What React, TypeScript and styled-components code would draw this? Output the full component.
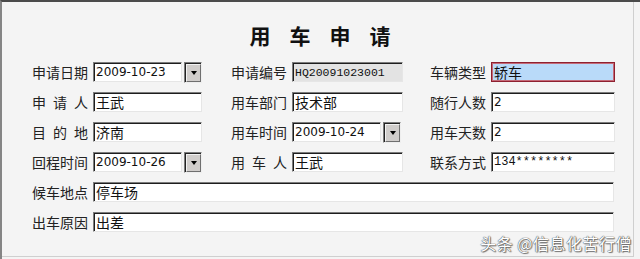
import React from "react";
import styled, { createGlobalStyle, css } from "styled-components";

const GlobalStyle = createGlobalStyle`
  html, body { margin: 0; padding: 0; background: #f4f4f4; }
  body { font-family: "Noto Sans CJK SC", "Noto Sans", sans-serif; }
`;

const Window = styled.div`
  position: relative;
  width: 640px;
  height: 259px;
  box-sizing: border-box;
  border-top: 2px solid #4b4b4b;
  border-left: 2px solid #858585;
  background: #f4f4f4;
  overflow: hidden;
`;

const Frame = styled.div`
  width: 632px;
  height: 255px;
  box-sizing: border-box;
  border-right: 1px solid #cfcfcf;
  border-bottom: 1px solid #cfcfcf;
  display: flex;
  flex-direction: column;
`;

const Title = styled.h1`
  margin: 21px 0 0 0;
  width: 636px;
  height: 24px;
  line-height: 24px;
  text-align: center;
  font-family: "Noto Sans CJK SC", sans-serif;
  font-size: 21px;
  font-weight: 700;
  color: #111;
  letter-spacing: 19px;
  text-indent: 19px;
`;

const Form = styled.div`
  margin-top: 15px;
  padding-left: 30px;
  display: grid;
  grid-template-columns: 199px 199px 185px;
  grid-auto-rows: 20px;
  row-gap: 10px;
`;

const Field = styled.div<{ $full?: boolean; $gap?: number }>`
  display: flex;
  align-items: center;
  gap: ${(p) => p.$gap ?? 5}px;
  ${(p) => p.$full && css`grid-column: 1 / -1;`}
`;

const Label = styled.div`
  width: 56px;
  display: flex;
  justify-content: space-between;
  font-family: "Noto Sans CJK SC", sans-serif;
  font-size: 14px;
  line-height: 20px;
  color: #222;
`;

type BoxKind = "normal" | "readonly" | "focused";

const TextBox = styled.div<{ $w: number; $kind?: BoxKind; $font?: "cjk" | "num" | "mono"; $size?: number }>`
  width: ${(p) => p.$w}px;
  height: 20px;
  box-sizing: border-box;
  display: flex;
  align-items: center;
  padding-left: 2px;
  white-space: nowrap;
  overflow: hidden;
  color: #111;
  background: #fff;
  border: 1px solid;
  border-color: #7c7c7c #e6e6e6 #e6e6e6 #7c7c7c;
  box-shadow: inset 1px 1px 0 #1e1e1e;
  font-size: ${(p) => p.$size ?? 14}px;
  font-family: ${(p) =>
    p.$font === "num"
      ? `"DejaVu Sans", sans-serif`
      : p.$font === "mono"
      ? `"Liberation Mono", monospace`
      : `"Noto Sans CJK SC", sans-serif`};
  ${(p) =>
    p.$kind === "readonly" &&
    css`
      background: #e3e3e3;
    `}
  ${(p) =>
    p.$kind === "focused" &&
    css`
      background: #b9daf9;
      border: 1px solid #8e2030;
      box-shadow: inset 0 0 0 1px #c46a78;
    `}
`;

const DateWrap = styled.div`
  display: flex;
  align-items: center;
  gap: 2px;
`;

const DropButton = styled.div`
  width: 18px;
  height: 21px;
  box-sizing: border-box;
  border: 1px solid;
  border-color: #7c7c7c #eeeeee #eeeeee #7c7c7c;
  box-shadow: inset 1px 1px 0 #222;
  padding: 1px 0 0 1px;
  display: flex;
`;

const ButtonFace = styled.div`
  flex: 1;
  background: #d0cdcb;
  border: 1px solid;
  border-color: #f2f2f2 #6f6f6f #6f6f6f #f2f2f2;
  display: flex;
  align-items: center;
  justify-content: center;
  &::after {
    content: "";
    width: 0;
    height: 0;
    border-left: 3px solid transparent;
    border-right: 3px solid transparent;
    border-top: 4px solid #000;
  }
`;

const Watermark = styled.div`
  position: absolute;
  right: 8px;
  bottom: 5px;
  font-family: "Noto Sans CJK SC", sans-serif;
  font-size: 16px;
  line-height: 22px;
  color: #ffffff;
  text-shadow: 0 0 1px #4a4a4a, 0 0 1px #4a4a4a, 1px 1px 1px #777;
  letter-spacing: 0.5px;
`;

const LabelText: React.FC<{ text: string }> = ({ text }) => (
  <Label>
    {text.split("").map((c, i) => (
      <span key={i}>{c}</span>
    ))}
  </Label>
);

const DateField: React.FC<{ value: string; w: number }> = ({ value, w }) => (
  <DateWrap>
    <TextBox $w={w} $font="num" $size={12}>
      {value}
    </TextBox>
    <DropButton>
      <ButtonFace />
    </DropButton>
  </DateWrap>
);

export default function App() {
  return (
    <>
      <GlobalStyle />
      <Window>
        <Frame>
          <Title>用车申请</Title>
          <Form>
            <Field>
              <LabelText text="申请日期" />
              <DateField value="2009-10-23" w={89} />
            </Field>
            <Field $gap={5}>
              <LabelText text="申请编号" />
              <TextBox $w={111} $kind="readonly" $font="mono" $size={11.5}>
                HQ20091023001
              </TextBox>
            </Field>
            <Field>
              <LabelText text="车辆类型" />
              <TextBox $w={124} $kind="focused">
                轿车
              </TextBox>
            </Field>

            <Field>
              <LabelText text="申请人" />
              <TextBox $w={109}>王武</TextBox>
            </Field>
            <Field>
              <LabelText text="用车部门" />
              <TextBox $w={111}>技术部</TextBox>
            </Field>
            <Field>
              <LabelText text="随行人数" />
              <TextBox $w={124} $font="num" $size={12}>
                2
              </TextBox>
            </Field>

            <Field>
              <LabelText text="目的地" />
              <TextBox $w={109}>济南</TextBox>
            </Field>
            <Field>
              <LabelText text="用车时间" />
              <DateField value="2009-10-24" w={89} />
            </Field>
            <Field>
              <LabelText text="用车天数" />
              <TextBox $w={124} $font="num" $size={12}>
                2
              </TextBox>
            </Field>

            <Field>
              <LabelText text="回程时间" />
              <DateField value="2009-10-26" w={89} />
            </Field>
            <Field>
              <LabelText text="用车人" />
              <TextBox $w={111}>王武</TextBox>
            </Field>
            <Field>
              <LabelText text="联系方式" />
              <TextBox $w={124} $font="mono" $size={12}>
                134********
              </TextBox>
            </Field>

            <Field $full>
              <LabelText text="候车地点" />
              <TextBox $w={521}>停车场</TextBox>
            </Field>
            <Field $full>
              <LabelText text="出车原因" />
              <TextBox $w={521}>出差</TextBox>
            </Field>
          </Form>
        </Frame>
        <Watermark>头条 @信息化苦行僧</Watermark>
      </Window>
    </>
  );
}
